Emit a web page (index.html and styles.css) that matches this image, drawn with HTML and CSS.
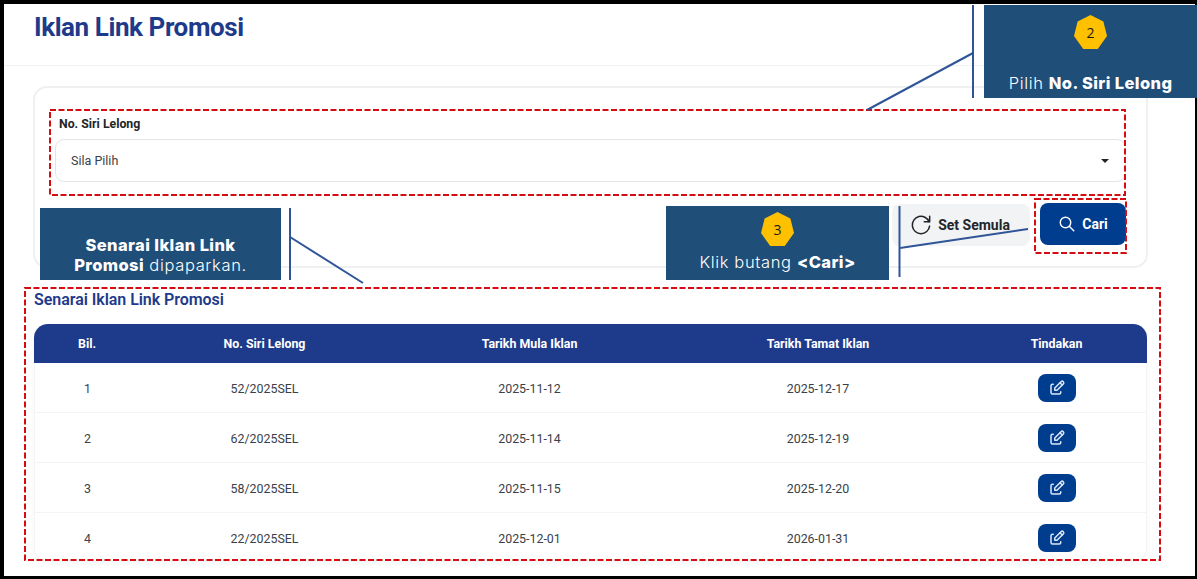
FILE: index.html
```html
<!DOCTYPE html>
<html lang="ms">
<head>
<meta charset="utf-8">
<title>Iklan Link Promosi</title>
<link rel="stylesheet" href="styles.css">
</head>
<body>
<div class="frame">
  <header class="page-head"><h1>Iklan Link Promosi</h1></header>
  <main class="content">
    <section class="filter-card">
      <label class="field-label">No. Siri Lelong</label>
      <div class="select"><span>Sila Pilih</span><i class="caret"></i></div>
      <div class="actions">
        <button class="btn btn-reset">
          <svg width="26" height="26" viewBox="0 0 24 24" fill="none" stroke="#212529" stroke-width="1.4" stroke-linecap="round" stroke-linejoin="round"><path d="M19.933 13.041a8 8 0 1 1-9.925-8.788c3.899-1 7.935 1.007 9.425 4.747"/><path d="M20 4v5h-5"/></svg>
          Set Semula
        </button>
        <button class="btn btn-search">
          <svg width="18" height="18" viewBox="0 0 24 24" fill="none" stroke="#fff" stroke-width="1.9" stroke-linecap="round"><circle cx="10" cy="10" r="7"/><path d="M21 21l-6-6"/></svg>
          Cari
        </button>
      </div>
    </section>
    <section class="list">
      <h2>Senarai Iklan Link Promosi</h2>
      <table class="data">
        <colgroup><col class="c1"><col class="c2"><col class="c3"><col class="c4"><col class="c5"></colgroup>
        <thead><tr><th>Bil.</th><th>No. Siri Lelong</th><th>Tarikh Mula Iklan</th><th>Tarikh Tamat Iklan</th><th>Tindakan</th></tr></thead>
        <tbody>
          <tr><td>1</td><td>52/2025SEL</td><td>2025-11-12</td><td>2025-12-17</td><td><button class="edit"><svg width="18" height="18" viewBox="0 0 24 24" fill="none" stroke="#dbe6f7" stroke-width="2" stroke-linecap="round" stroke-linejoin="round"><path d="M7 7H6a2 2 0 0 0-2 2v9a2 2 0 0 0 2 2h9a2 2 0 0 0 2-2v-1"/><path d="M20.4 6.6a2.1 2.1 0 0 0-3-3L9 12v3h3z"/><path d="M16 5l3 3"/></svg></button></td></tr>
          <tr><td>2</td><td>62/2025SEL</td><td>2025-11-14</td><td>2025-12-19</td><td><button class="edit"><svg width="18" height="18" viewBox="0 0 24 24" fill="none" stroke="#dbe6f7" stroke-width="2" stroke-linecap="round" stroke-linejoin="round"><path d="M7 7H6a2 2 0 0 0-2 2v9a2 2 0 0 0 2 2h9a2 2 0 0 0 2-2v-1"/><path d="M20.4 6.6a2.1 2.1 0 0 0-3-3L9 12v3h3z"/><path d="M16 5l3 3"/></svg></button></td></tr>
          <tr><td>3</td><td>58/2025SEL</td><td>2025-11-15</td><td>2025-12-20</td><td><button class="edit"><svg width="18" height="18" viewBox="0 0 24 24" fill="none" stroke="#dbe6f7" stroke-width="2" stroke-linecap="round" stroke-linejoin="round"><path d="M7 7H6a2 2 0 0 0-2 2v9a2 2 0 0 0 2 2h9a2 2 0 0 0 2-2v-1"/><path d="M20.4 6.6a2.1 2.1 0 0 0-3-3L9 12v3h3z"/><path d="M16 5l3 3"/></svg></button></td></tr>
          <tr><td>4</td><td>22/2025SEL</td><td>2025-12-01</td><td>2026-01-31</td><td><button class="edit"><svg width="18" height="18" viewBox="0 0 24 24" fill="none" stroke="#dbe6f7" stroke-width="2" stroke-linecap="round" stroke-linejoin="round"><path d="M7 7H6a2 2 0 0 0-2 2v9a2 2 0 0 0 2 2h9a2 2 0 0 0 2-2v-1"/><path d="M20.4 6.6a2.1 2.1 0 0 0-3-3L9 12v3h3z"/><path d="M16 5l3 3"/></svg></button></td></tr>
        </tbody>
      </table>
    </section>
  </main>

  <svg class="leaders" width="1197" height="579" viewBox="0 0 1197 579" fill="none">
    <g class="dashes">
      <rect x="50" y="110" width="1075" height="85"/>
      <rect x="1035" y="199" width="91" height="54"/>
      <rect x="25" y="288" width="1135" height="272"/>
    </g>
    <g class="lines">
      <path d="M973 5V98"/><path d="M973 53L867 110"/>
      <path d="M290 208V280"/><path d="M290 237L363 283"/>
      <path d="M899.500 206V277"/><path d="M900 248L1028 229"/>
    </g>
  </svg>

  <aside class="note note-2">
    <span class="badge">2</span>
    <p>Pilih <b>No. Siri Lelong</b></p>
  </aside>
  <aside class="note note-3">
    <span class="badge">3</span>
    <p>Klik butang <b>&lt;Cari&gt;</b></p>
  </aside>
  <aside class="note note-1">
    <p><b>Senarai Iklan Link Promosi</b> dipaparkan.</p>
  </aside>
</div>
</body>
</html>
```
FILE: styles.css
```css
* { box-sizing: border-box; }
html, body { margin: 0; height: 100%; }
body { font-family: Roboto, "Liberation Sans", sans-serif; background: #fff; overflow: hidden; }

.frame {
  position: relative;
  width: 1197px;
  height: 579px;
  overflow: hidden;
  background: #fff;
}
.frame::after {
  content: "";
  position: absolute;
  inset: 0;
  border-style: solid;
  border-color: #000;
  border-width: 4px 2px 3px 4px;
  pointer-events: none;
}

.page-head {
  height: 66px;
  padding: 12px 0 0 34px;
  border-bottom: 1px solid #f1f2f4;
}
.page-head h1 {
  margin: 0;
  font-size: 26px;
  line-height: 30px;
  font-weight: 700;
  letter-spacing: -0.42px;
  color: #1e3a8a;
}

.content { padding: 20px 49px 0 34px; }

.filter-card {
  height: 182px;
  margin-left: -1px;
  padding: 28px 20px 0;
  border: 2px solid #eff0f2;
  border-radius: 14px;
}
.field-label {
  display: block;
  font-size: 12.3px;
  line-height: 16px;
  font-weight: 700;
  color: #212529;
  margin: 0 0 7px 4px;
}
.select {
  display: flex;
  align-items: center;
  justify-content: space-between;
  height: 43px;
  padding: 0 16px 0 15px;
  border: 1px solid #e3e5e8;
  border-radius: 9px;
  font-size: 12.5px;
  color: #3a4149;
}
.caret {
  width: 0;
  height: 0;
  border-left: 4px solid transparent;
  border-right: 4px solid transparent;
  border-top: 4px solid #212529;
}
.actions {
  display: flex;
  justify-content: flex-end;
  gap: 10px;
  margin-top: 21px;
}
.btn {
  display: flex;
  align-items: center;
  justify-content: center;
  height: 42px;
  padding: 0;
  border: 0;
  border-radius: 8px;
  font: 700 14px Roboto, sans-serif;
}
.btn-reset { width: 138px; gap: 4px; padding-right: 4px; background: #f2f3f4; color: #212529; margin-top: 1px; }
.btn-search { width: 86px; gap: 6px; background: #003d8f; color: #fff; }

.list { padding-top: 23px; }
.list h2 {
  margin: 0 0 15px;
  font-size: 16px;
  line-height: 18px;
  font-weight: 600;
  letter-spacing: -0.05px;
  color: #1e3a8a;
}
.data {
  width: 1113px;
  table-layout: fixed;
  border-collapse: separate;
  border-spacing: 0;
  font-size: 12.4px;
  border-radius: 14px;
  box-shadow: 0 2px 4px rgba(30, 58, 138, 0.05);
}
.c1 { width: 106px; }
.c2 { width: 249px; }
.c3 { width: 281px; }
.c4 { width: 296px; }
.c5 { width: 181px; }
.data th {
  height: 39px;
  background: #1e3a8a;
  color: #fff;
  font-weight: 700;
  text-align: center;
  padding: 0;
}
.data th:first-child { border-top-left-radius: 14px; }
.data th:last-child { border-top-right-radius: 14px; }
.data td {
  height: 50px;
  text-align: center;
  padding: 1px 0 0;
  color: #3a4149;
  border-bottom: 1px solid #f3f4f6;
}
.data td:first-child { border-left: 1px solid #f3f4f6; }
.data td:last-child { border-right: 1px solid #f3f4f6; }
.data tr:last-child td { height: 48px; padding-top: 3px; }
.data tr:last-child td:first-child { border-bottom-left-radius: 12px; }
.data tr:last-child td:last-child { border-bottom-right-radius: 12px; }
.edit {
  display: inline-flex;
  align-items: center;
  justify-content: center;
  vertical-align: middle;
  width: 38px;
  height: 28px;
  margin: -1px 0 0 1px;
  padding: 0;
  border: 0;
  border-radius: 8px;
  background: #003d8f;
}

.leaders { position: absolute; left: 0; top: 0; }
.dashes { stroke: #d40d12; stroke-width: 2; stroke-dasharray: 6 2.5; }
.lines { stroke: #2f5597; stroke-width: 2; }

.note {
  position: absolute;
  z-index: 1;
  display: flex;
  flex-direction: column;
  align-items: center;
  background: #1f4e79;
  color: #fff;
  font-family: Inter, "Open Sans", sans-serif;
  text-align: center;
}
.note p { margin: 0; font-size: 16.5px; line-height: 20px; font-weight: 300; letter-spacing: 0.65px; }
.note b { font-weight: 800; letter-spacing: 0.4px; }
.note-2 { left: 984px; top: 5px; width: 213px; height: 93px; padding-top: 10px; }
.note-2 p { margin-top: 24px; }
.note-3 { left: 666px; top: 206px; width: 223px; height: 74px; padding-top: 6px; }
.note-3 p { margin-top: 6px; }
.note-1 { left: 40px; top: 208px; width: 241px; height: 72px; justify-content: flex-end; padding: 0 24px 5px; }

.badge {
  display: flex;
  align-items: center;
  justify-content: center;
  width: 33px;
  height: 34px;
  background: #ffc000;
  color: #1a1a1a;
  font: 400 14px "Open Sans", sans-serif;
  clip-path: polygon(50% 0, 89% 19%, 100% 62%, 72% 100%, 28% 100%, 0 62%, 11% 19%);
}
```
